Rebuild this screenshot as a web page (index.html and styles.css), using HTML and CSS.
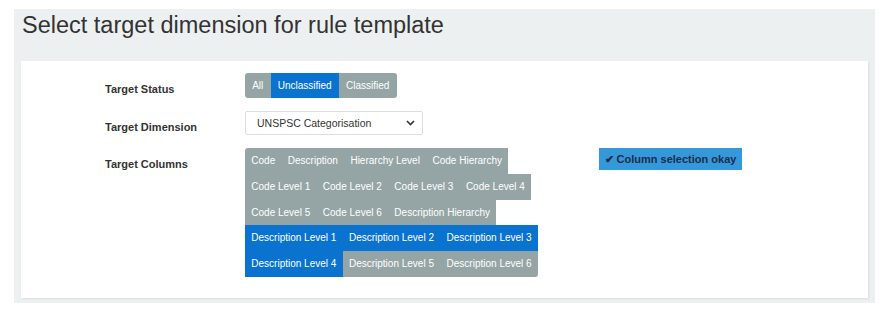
FILE: index.html
```html
<!DOCTYPE html>
<html lang="en">
<head>
  <meta charset="UTF-8" />
  <title>Rule template</title>
  <link rel="stylesheet" href="styles.css">
</head>
<body>

  <div class="page">
    <h3 class="page-title">Select target dimension for rule template</h3>

    <div class="card">
      <!-- status -->
      <div class="form-row">
        <div class="form-label">Target Status</div>
        <div class="btn-group status">
          <span class="btn">All</span>
          <span class="btn active">Unclassified</span>
          <span class="btn">Classified</span>
        </div>
      </div>

      <!-- dimension -->
      <div class="form-row">
        <div class="form-label">Target Dimension</div>
        <div class="select">
          <span>UNSPSC Categorisation</span>
          <svg class="chevron" width="9" height="6" viewBox="0 0 9 6"><path d="M1 1l3.5 3.5L8 1" fill="none" stroke="#333" stroke-width="1.6"/></svg>
        </div>
      </div>

      <!-- columns -->
      <div class="form-row">
        <div class="form-label">Target Columns</div>
        <div class="btn-group wrap">
          <span class="btn">Code</span>
          <span class="btn">Description</span>
          <span class="btn">Hierarchy Level</span>
          <span class="btn">Code Hierarchy</span>
          <span class="btn">Code Level 1</span>
          <span class="btn">Code Level 2</span>
          <span class="btn">Code Level 3</span>
          <span class="btn">Code Level 4</span>
          <span class="btn">Code Level 5</span>
          <span class="btn">Code Level 6</span>
          <span class="btn">Description Hierarchy</span>
          <span class="btn active">Description Level 1</span>
          <span class="btn active">Description Level 2</span>
          <span class="btn active">Description Level 3</span>
          <span class="btn active">Description Level 4</span>
          <span class="btn">Description Level 5</span>
          <span class="btn">Description Level 6</span>
        </div>
        <div class="badge">&#10004; Column selection okay</div>
      </div>
    </div>
  </div>

</body>
</html>
```

FILE: styles.css
```css
body {
  margin: 0;
  font-family: "Liberation Sans", Arial, sans-serif;
  color: #333;
  background: #fff;
}

.page {
  margin: 9px 11px 0 14px;
  padding: 2.5px 7px 5px;
  background: #edf0f1;
}

.page-title {
  font-size: 23.5px;
  font-weight: normal;
  line-height: 26px;
  margin: 0 0 23.5px 1px;
  color: #333;
}

.card {
  background: #fff;
  padding: 12px 0 21px 84px;
  box-shadow: 1px 1px 2px rgba(0, 0, 0, 0.08);
}

.form-row {
  display: flex;
  align-items: flex-start;
  margin-bottom: 13px;
}

.form-row:last-child {
  margin-bottom: 0;
}

.form-label {
  width: 140px;
  flex-shrink: 0;
  font-size: 11px;
  font-weight: bold;
  line-height: 13px;
  padding-top: 9.5px;
}

.btn-group {
  display: flex;
  border-radius: 3px;
  overflow: hidden;
}

.btn-group.wrap {
  flex-wrap: wrap;
  width: 296px;
  border-radius: 0;
}

.btn {
  display: block;
  font-size: 10px;
  line-height: 25px;
  padding: 0 6.5px;
  color: #fff;
  background: #95a5a6;
}

.status .btn {
  padding: 0 7.2px;
}

.wrap .btn {
  line-height: 25.8px;
  padding: 0 6.3px;
}

.wrap .btn:first-child {
  border-top-left-radius: 3px;
}

.wrap .btn:last-child {
  border-bottom-right-radius: 3px;
}

.btn.active {
  background: #0a73d0;
}

.select {
  width: 158px;
  height: 22px;
  border: 1px solid #dcdfe2;
  border-radius: 2px;
  padding: 0 7px 0 11px;
  display: flex;
  align-items: center;
  justify-content: space-between;
  font-size: 10.5px;
  color: #333;
}

.badge {
  margin-left: 58px;
  background: #3498db;
  color: #1a2f47;
  font-size: 11px;
  font-weight: bold;
  line-height: 22px;
  padding: 0 5.5px;
}
```
